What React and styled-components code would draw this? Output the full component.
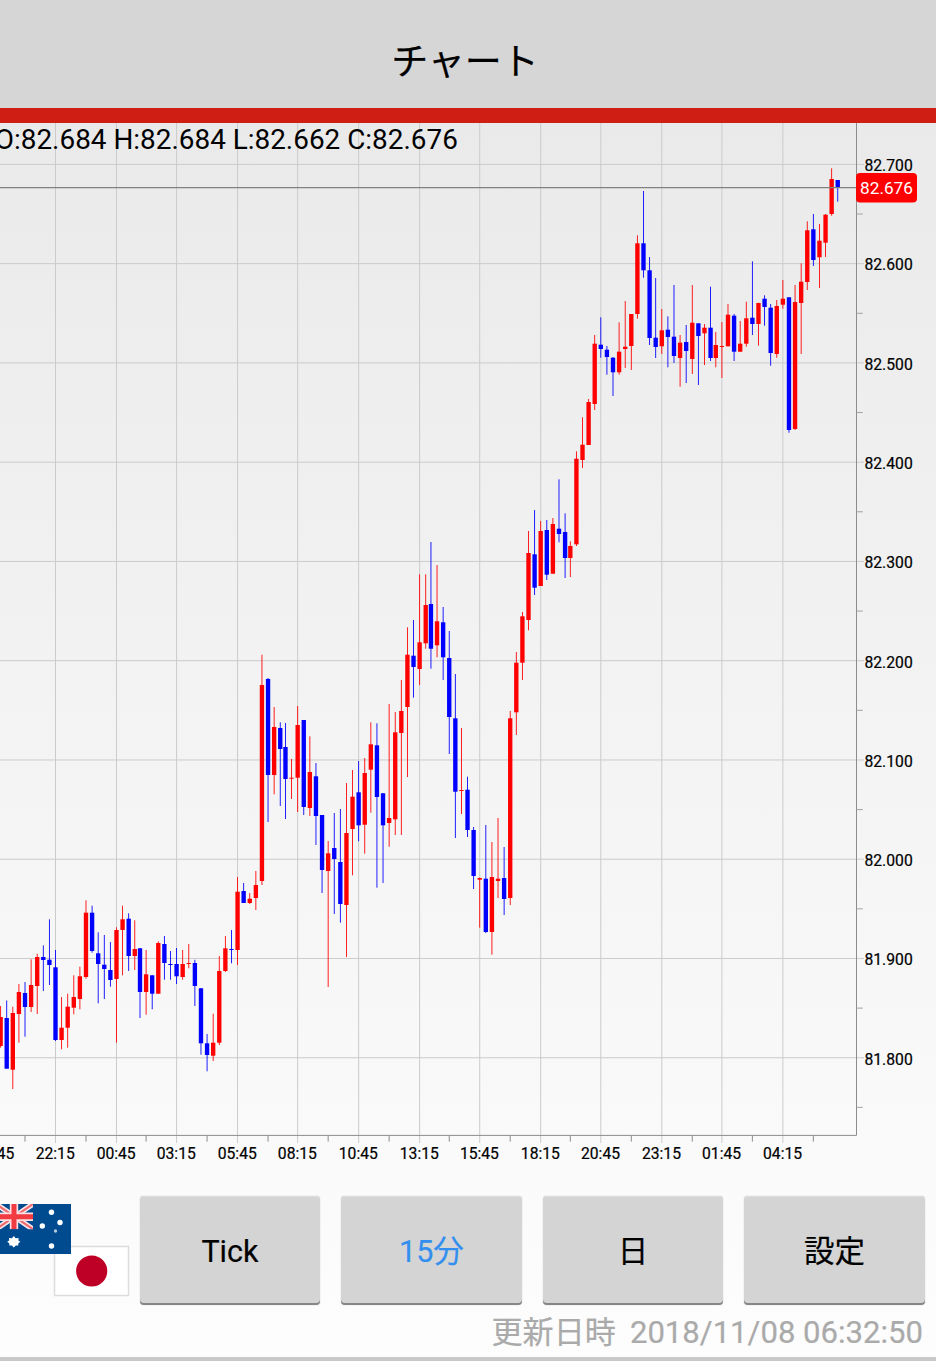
import React from 'react'
import styled, { createGlobalStyle } from 'styled-components'

const GlobalStyle = createGlobalStyle`
  body {
    margin: 0;
    background: #fcfcfc;
    font-family: Roboto, 'Noto Sans CJK JP', sans-serif;
    color: #000;
  }
`

const Screen = styled.div`
  display: flex;
  flex-direction: column;
  box-sizing: border-box;
  width: 936px;
  height: 1361px;
  overflow: hidden;
  border-bottom: 4px solid #c9c9c9;
  background: linear-gradient(#e8e8e8, #fdfdfd);
`

const Header = styled.header`
  display: flex;
  flex: 0 0 auto;
  align-items: center;
  justify-content: center;
  box-sizing: border-box;
  height: 123px;
  padding-right: 6px;
  border-bottom: 15px solid #cf1e14;
  background: #d6d6d6;
`

const Title = styled.h1`
  margin: 18px 0 0;
  font-size: 37px;
  font-weight: 400;
  line-height: 54px;
  -webkit-text-stroke: 0.2px #000;
`

const ChartArea = styled.svg`
  display: block;
  flex: 0 0 auto;
  width: 936px;
  height: 1047px;

  text {
    font-family: Roboto, sans-serif;
  }
`

const Toolbar = styled.div`
  display: flex;
  flex: 0 0 auto;
  align-items: flex-start;
  padding: 26px 11px 0 0;
`

const PairFlags = styled.svg`
  display: block;
  flex: 0 0 auto;
  width: 130px;
  height: 109px;
  margin-right: 9.5px;
`

const Buttons = styled.div`
  display: grid;
  flex: 1 1 auto;
  grid-template-columns: repeat(4, 1fr);
  column-gap: 20.7px;
`

const Button = styled.button`
  height: 109px;
  padding: 2px 0 0;
  border: 0;
  border-radius: 4px;
  background: #d4d4d4;
  box-shadow: inset 0 -2px 0 #868686, inset 0 1px 0 #dedede,
    0 0 1px rgba(0, 0, 0, 0.35);
  color: ${props => (props.$active ? '#338fee' : '#000')};
  font-family: inherit;
  font-size: 30.5px;
  line-height: 36px;
  -webkit-text-stroke: 0.2px currentColor;
`

const Updated = styled.p`
  display: flex;
  flex: 0 0 auto;
  justify-content: flex-end;
  gap: 14px;
  margin: 6px 13px 0 0;
  color: #aaa;
  font-size: 31.1px;
  line-height: 44px;
  -webkit-text-stroke: 0.2px currentColor;
`

const UP = '#ff0000'
const DOWN = '#0000ff'
const PX = 0.8711
const AXIS_X = 856.5
const AXIS_Y = 1135.4
const FIRST = -9

// direction, high, body top, body bottom, low
const candles = [
  ['u', 1006, 1017, 1046, 1047.7],
  ['d', 1000.5, 1018, 1068.7, 1068.7],
  ['u', 1006.7, 1013, 1069.7, 1089],
  ['u', 984, 992, 1014, 1042.7],
  ['d', 982, 993, 1007, 1036.7],
  ['u', 959.3, 985, 1007, 1012],
  ['u', 953.7, 957, 986, 1014],
  ['d', 945.3, 957, 960, 991],
  ['d', 919.3, 959.7, 965, 985],
  ['d', 950, 967.3, 1040, 1041],
  ['u', 997, 1027.7, 1040, 1049.3],
  ['u', 993.7, 1006.7, 1027.7, 1047.7],
  ['u', 975.3, 997, 1007.7, 1014.3],
  ['u', 966.7, 976.3, 999, 1009.3],
  ['u', 900.3, 912.7, 977, 978.7],
  ['d', 905.7, 912.7, 951, 952.7],
  ['d', 932.3, 953.3, 964, 1003.3],
  ['d', 935, 964.7, 969, 999],
  ['d', 942, 970, 980, 986.7],
  ['u', 927.3, 930, 979, 1042.7],
  ['u', 905.7, 919.3, 930, 975.3],
  ['d', 913.3, 918.7, 956, 971],
  ['u', 920.3, 949, 956, 970],
  ['d', 948, 948.3, 992, 1018],
  ['u', 950, 974.3, 992, 1014.7],
  ['d', 975.3, 975.3, 993.7, 1009.3],
  ['u', 941.3, 943, 993.7, 993.7],
  ['d', 936, 944, 963, 979.7],
  ['d', 951, 964, 965, 979.7],
  ['d', 948, 964, 976.3, 984],
  ['u', 950, 964, 977, 979.7],
  ['u', 944, 963, 964, 968.3],
  ['d', 959.7, 963, 986, 1006],
  ['d', 988, 988.3, 1043.3, 1054.7],
  ['d', 1034, 1043.3, 1055, 1071.3],
  ['u', 1013.7, 1042.7, 1055.7, 1061],
  ['u', 956, 971, 1042.7, 1045],
  ['u', 936, 948.3, 971, 972],
  ['d', 930, 949, 950, 963.3],
  ['u', 877, 891.7, 950, 965],
  ['d', 883, 891, 903, 903],
  ['u', 893, 898.7, 903, 904],
  ['u', 871, 885, 898, 910],
  ['u', 654.7, 685, 881, 885],
  ['d', 678, 679, 775, 822],
  ['u', 707, 727, 775, 794.3],
  ['d', 722.3, 728, 749, 806],
  ['d', 723, 747, 779, 819],
  ['u', 759, 777.7, 778.7, 799],
  ['u', 706, 725, 777.7, 812],
  ['d', 720, 720, 807, 815],
  ['u', 736.3, 772, 808, 816],
  ['d', 763, 776.3, 816, 845],
  ['d', 815, 815, 870, 893],
  ['u', 841, 853.3, 871, 987],
  ['d', 813, 848, 859, 914],
  ['d', 809, 862, 904, 922.7],
  ['u', 783, 833, 905, 957],
  ['u', 770, 796.7, 829, 875.3],
  ['d', 761, 792.3, 825.3, 841.3],
  ['u', 758, 773, 824.7, 853.7],
  ['u', 722.3, 744.3, 769.7, 812.7],
  ['d', 723.3, 745.3, 797, 887.7],
  ['d', 793, 793.3, 825.3, 883],
  ['u', 704, 818, 823, 846.7],
  ['u', 712, 732.3, 819.3, 835],
  ['u', 680, 711, 733, 835],
  ['u', 627.3, 654.7, 707, 777],
  ['d', 620, 655.7, 667, 697.7],
  ['u', 574.3, 642.3, 669, 685],
  ['u', 574.3, 605, 643.3, 648.7],
  ['d', 542, 604, 648.7, 668.7],
  ['u', 565, 621.3, 645.3, 657.3],
  ['d', 607, 622.3, 657.3, 680],
  ['d', 631, 658, 717, 754],
  ['d', 674, 718.3, 791.7, 838],
  ['u', 728, 790, 791, 814],
  ['d', 776.7, 789.7, 830, 837],
  ['d', 827, 830, 876, 889],
  ['u', 877.5, 878, 879.7, 927.7],
  ['d', 825, 878.7, 932, 933],
  ['u', 842, 877, 932, 954.7],
  ['u', 818, 878.7, 881, 898],
  ['d', 847, 878, 899, 915],
  ['u', 711, 718.3, 898, 905],
  ['u', 652, 662.7, 712.3, 735],
  ['u', 612, 616.3, 662.7, 680],
  ['u', 531, 553, 620, 630.3],
  ['d', 510, 554.3, 587.7, 595],
  ['u', 521, 531, 586, 586],
  ['d', 520, 530, 574.7, 580],
  ['u', 518, 524, 573.7, 573.7],
  ['d', 479.3, 528.7, 534, 542.3],
  ['d', 513.3, 532, 558, 578],
  ['u', 541.3, 546, 558, 577],
  ['u', 451.3, 458.7, 544.3, 546],
  ['u', 417.3, 444.7, 460, 468],
  ['u', 399, 402, 445, 445],
  ['u', 335, 343.7, 404, 410],
  ['d', 317.3, 344.7, 349, 357.7],
  ['d', 346, 349.7, 357, 374.7],
  ['d', 357, 357.7, 372.3, 396],
  ['u', 322.3, 351.7, 372.3, 374.7],
  ['u', 301, 346.7, 349, 368],
  ['u', 314, 314, 346, 370],
  ['u', 235.3, 243.3, 314, 318.7],
  ['d', 191, 243.3, 270.3, 277.7],
  ['d', 257, 270.3, 338, 345],
  ['d', 278, 337.7, 347, 358],
  ['u', 309, 330.3, 346.3, 354],
  ['d', 316.3, 329.7, 337, 367.3],
  ['d', 285, 336.7, 356, 363],
  ['u', 335, 342.7, 358, 386.7],
  ['d', 325, 342, 351, 383],
  ['u', 285, 322.7, 359, 374],
  ['d', 323.3, 323.3, 336, 385],
  ['u', 324, 327.7, 333.3, 365],
  ['d', 286.7, 327.7, 358, 361],
  ['u', 332, 345, 358, 367.3],
  ['u', 322, 346, 347, 378],
  ['u', 304, 314.7, 346.3, 346.3],
  ['d', 314, 315.7, 351.7, 361],
  ['u', 321, 343.7, 351.7, 351.7],
  ['u', 301.7, 318.3, 343.7, 346.7],
  ['d', 261.3, 317.7, 324, 335],
  ['u', 302.7, 303, 324, 345.7],
  ['d', 295.3, 298.7, 307, 325.7],
  ['d', 304, 307.7, 353, 365.7],
  ['u', 300, 306, 354, 357.7],
  ['u', 280, 298.7, 304.7, 308.7],
  ['d', 297, 297.3, 430, 432.7],
  ['u', 285, 302, 429, 430],
  ['u', 263.3, 281.7, 303, 354],
  ['u', 221.3, 230.3, 282, 290],
  ['d', 214, 229.3, 260, 266],
  ['u', 224, 240.7, 257.3, 288],
  ['u', 214, 214.7, 242.7, 257],
  ['u', 168.3, 179, 214, 215.7],
  ['d', 180, 180, 187.7, 201.7]
]

const times = [
  '22:15', '00:45', '03:15', '05:45', '08:15', '10:45', '13:15',
  '15:45', '18:15', '20:45', '23:15', '01:45', '04:15'
]

const prices = [
  '82.700', '82.600', '82.500', '82.400', '82.300',
  '82.200', '82.100', '82.000', '81.900', '81.800'
]

// slots are 7 units wide, except for these which are 6
const narrowSlots = [14, 38, 62, 85, 109]
const slotX = i =>
  55.5 + PX * (7 * i - narrowSlots.filter(slot => slot <= i).length)
const priceY = i => 164.4 + 99.26 * i

const Candle = ({ x, data: [dir, high, top, bottom, low] }) => (
  <g fill={dir === 'u' ? UP : DOWN}>
    <rect x={x - PX / 2} y={high} width={PX} height={low - high} />
    <rect x={x - PX * 2.5} y={top} width={PX * 5} height={bottom - top} />
  </g>
)

const Grid = () => (
  <g stroke="#cbcbcb" strokeWidth="1">
    {times.map((time, i) => (
      <line key={time} x1={slotX(i * 10)} x2={slotX(i * 10)} y1="123" y2="1143" />
    ))}
    {prices.map((price, i) => (
      <line key={price} x1="0" x2="864" y1={priceY(i)} y2={priceY(i)} />
    ))}
  </g>
)

const Axes = () => (
  <g stroke="#8c8c8c" strokeWidth="1">
    <line x1={AXIS_X} x2={AXIS_X} y1="123" y2={AXIS_Y} />
    <line x1="0" x2={AXIS_X} y1={AXIS_Y} y2={AXIS_Y} />
    {prices.map((price, i) => (
      <line
        key={price}
        x1={AXIS_X}
        x2="862.7"
        y1={priceY(i + 0.5)}
        y2={priceY(i + 0.5)}
        stroke="#a0a0a0"
      />
    ))}
    {[-5, ...times.map((time, i) => i * 10 + 5)].map(i => (
      <line key={i} x1={slotX(i)} x2={slotX(i)} y1={AXIS_Y} y2="1141.6" />
    ))}
  </g>
)

const Chart = () => (
  <ChartArea viewBox="0 123 936 1047">
    <Grid />
    {candles.map((data, i) => (
      <Candle key={i} x={slotX(i + FIRST)} data={data} />
    ))}
    <Axes />
    <line x1="0" x2="857" y1="187.6" y2="187.6" stroke="#808080" strokeWidth="1.4" />
    <g fontSize="15.7" stroke="#000" strokeWidth="0.2">
      {prices.map((price, i) => (
        <text key={price} x="864.4" y={priceY(i) + 6.8} textLength="48.4">
          {price}
        </text>
      ))}
      <text x="-5.2" y="1158.8" textAnchor="middle">19:45</text>
      {times.map((time, i) => (
        <text key={time} x={slotX(i * 10) - 0.3} y="1158.8" textAnchor="middle">
          {time}
        </text>
      ))}
    </g>
    <rect x="856" y="173" width="61" height="29.5" rx="4" fill={UP} />
    <text x="860" y="193.8" fontSize="17.4" fill="#fff" textLength="53" lengthAdjust="spacingAndGlyphs">
      82.676
    </text>
    <text x="-5.2" y="149.2" fontSize="28" textLength="463" lengthAdjust="spacingAndGlyphs">
      O:82.684 H:82.684 L:82.662 C:82.676
    </text>
  </ChartArea>
)

const CurrencyPair = () => (
  <PairFlags viewBox="0 1196 130 109">
    <rect x="54.5" y="1246.5" width="74" height="49" fill="#fff" stroke="#dcdcdc" strokeWidth="1.5" />
    <circle cx="91.7" cy="1271" r="15.6" fill="#bf0026" />
    <rect x="-4" y="1204" width="75" height="50" fill="#004b90" />
    <svg x="-4" y="1204" width="37" height="25.3" viewBox="0 0 37 25.3">
      <path d="M0 0L37 25.3M37 0L0 25.3" stroke="#fbe4e6" strokeWidth="5.4" />
      <path d="M0 0L37 25.3M37 0L0 25.3" stroke="#f0686e" strokeWidth="2" />
      <path d="M18 0V25.3M0 12.7H37" stroke="#fbdfe1" strokeWidth="8.4" />
      <path d="M18 0V25.3M0 12.7H37" stroke="#f23a42" strokeWidth="5" />
    </svg>
    <g fill="#fff">
      <path d="M13.8 1236l1.8 2.2 3-.2-.2 2.4 2 1.4-2 1.4-.2 2.4-2.4-.2-2 2-2-2-2.4.2-.2-2.4-2-1.4 2-1.4-.2-2.4 3 .2z" />
      <circle cx="51.5" cy="1212.3" r="2.7" />
      <circle cx="42.3" cy="1226" r="2.7" />
      <circle cx="60" cy="1222.5" r="2.7" />
      <circle cx="55.5" cy="1231" r="1.7" fillOpacity="0.7" />
      <circle cx="51.5" cy="1246" r="2.7" />
    </g>
  </PairFlags>
)

const App = () => (
  <>
    <GlobalStyle />
    <Screen>
      <Header>
        <Title>チャート</Title>
      </Header>
      <Chart />
      <Toolbar>
        <CurrencyPair />
        <Buttons>
          <Button>Tick</Button>
          <Button $active>15分</Button>
          <Button>日</Button>
          <Button>設定</Button>
        </Buttons>
      </Toolbar>
      <Updated>
        <span>更新日時</span>
        <span>2018/11/08 06:32:50</span>
      </Updated>
    </Screen>
  </>
)

export default App
